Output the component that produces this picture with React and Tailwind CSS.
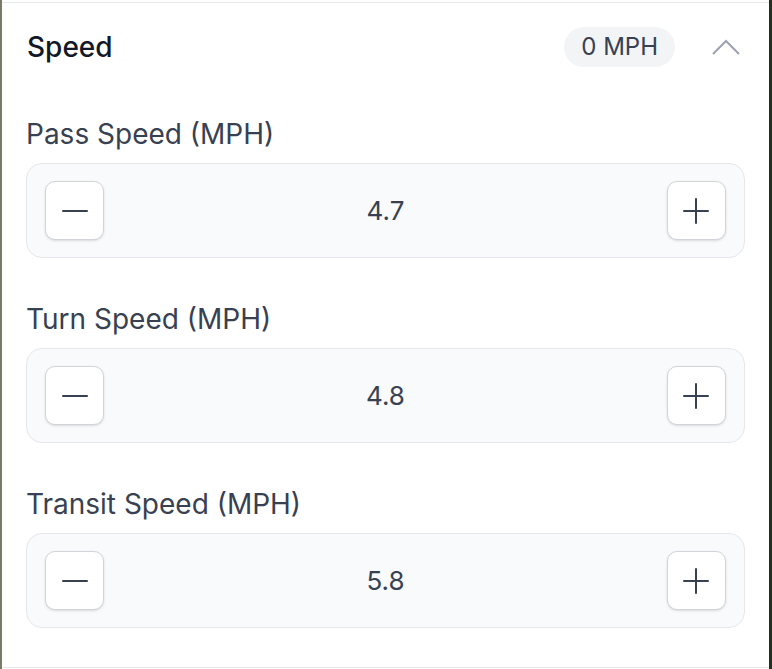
import React, { useState } from "react";

const Stepper = ({ label, value, onChange }) => {
  return (
    <div>
      <div className="h-8 leading-8 text-[28px] text-[#374151] mb-[13px] whitespace-nowrap">{label}</div>
      <div className="h-[95px] rounded-2xl border border-[#e5e7eb] bg-[#f9fafb] px-[18px] flex items-center justify-between">
        <button
          onClick={() => onChange(-0.1)}
          className="w-[59px] h-[59px] rounded-[10px] bg-white border border-[#d1d5db] shadow-sm flex items-center justify-center"
        >
          <svg width="28" height="28" viewBox="0 0 28 28">
            <path d="M2 14h24" stroke="#374151" strokeWidth="2" strokeLinecap="round" />
          </svg>
        </button>
        <span className="text-[26px] text-[#374151]">{value.toFixed(1)}</span>
        <button
          onClick={() => onChange(0.1)}
          className="w-[59px] h-[59px] rounded-[10px] bg-white border border-[#d1d5db] shadow-sm flex items-center justify-center"
        >
          <svg width="28" height="28" viewBox="0 0 28 28">
            <path d="M2 14h24M14 2v24" stroke="#374151" strokeWidth="2" strokeLinecap="round" />
          </svg>
        </button>
      </div>
    </div>
  );
};

const App = () => {
  const [speeds, setSpeeds] = useState({ pass: 4.7, turn: 4.8, transit: 5.8 });

  const bump = (key) => (d) =>
    setSpeeds((s) => ({ ...s, [key]: Math.max(0, Math.round((s[key] + d) * 10) / 10) }));

  return (
    <div className="h-[669px] flex font-['Inter',sans-serif]">
      <div className="w-[2px] bg-[#7b7a68]"></div>
      <div className="w-[767px] bg-white pt-[2px]">
        <div className="h-[666px] border-y border-[#e5e7eb]">
          {/* Header */}
          <div className="h-[88px] px-[25px] flex items-center justify-between">
            <h2 className="text-[28px] font-medium text-[#111827]">Speed</h2>
            <div className="flex items-center">
              <span className="h-10 px-[17px] rounded-full bg-[#f3f4f6] text-[24px] text-[#374151] flex items-center">
                0 MPH
              </span>
              <svg className="ml-[36px] mr-[3px]" width="30" height="18" viewBox="0 0 30 18">
                <path d="M2 16L15 3l13 13" fill="none" stroke="#9ca3af" strokeWidth="2" />
              </svg>
            </div>
          </div>

          {/* Steppers */}
          <div className="px-[24px] pt-[27px] flex flex-col gap-[45px]">
            <Stepper label="Pass Speed (MPH)" value={speeds.pass} onChange={bump("pass")} />
            <Stepper label="Turn Speed (MPH)" value={speeds.turn} onChange={bump("turn")} />
            <Stepper label="Transit Speed (MPH)" value={speeds.transit} onChange={bump("transit")} />
          </div>
        </div>
      </div>
      <div className="flex-1 bg-[#1f3318]"></div>
    </div>
  );
};

export default App;
